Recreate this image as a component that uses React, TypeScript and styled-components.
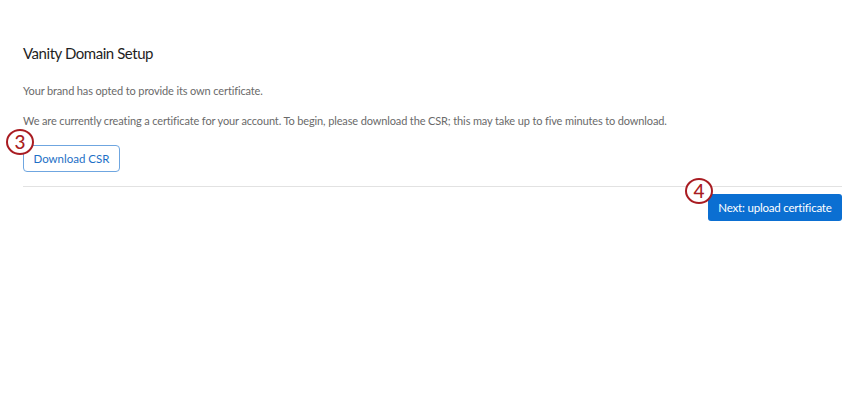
import React from "react";
import styled, { createGlobalStyle } from "styled-components";

const Global = createGlobalStyle`
  html, body { margin: 0; padding: 0; background: #fff; }
  body { font-family: Lato, "Open Sans", "Liberation Sans", sans-serif; }
`;

const Page = styled.div`
  width: 850px;
  height: 412px;
  box-sizing: border-box;
  padding: 42px 8px 0 23px;
  display: flex;
  flex-direction: column;
`;

const Title = styled.h1`
  margin: 0;
  font-size: 15px;
  font-weight: 400;
  letter-spacing: -0.45px;
  line-height: 22px;
  color: #1f1f1f;
`;

const Para = styled.p<{ $top: number }>`
  margin: ${(p) => p.$top}px 0 0;
  font-size: 11px;
  letter-spacing: -0.13px;
  line-height: 16px;
  color: #6a6a6a;
`;

const Anchor = styled.div<{ $top?: number }>`
  position: relative;
  align-self: flex-start;
  margin-top: ${(p) => p.$top ?? 0}px;
  display: flex;
`;

const OutlineButton = styled.button`
  height: 27px;
  width: 97px;
  box-sizing: border-box;
  border: 1px solid #6fa6e0;
  border-radius: 4px;
  background: #fff;
  color: #1d6fc6;
  font-family: inherit;
  font-size: 11.5px;
  padding: 0;
`;

const Divider = styled.hr`
  margin: 14px 0 0;
  border: 0;
  border-top: 1px solid #e2e2e2;
`;

const Footer = styled.div`
  display: flex;
  justify-content: flex-end;
  margin-top: 7px;
`;

const PrimaryButton = styled.button`
  height: 27px;
  width: 134px;
  box-sizing: border-box;
  border: 0;
  border-radius: 3px;
  background: #0b6fd2;
  color: #fff;
  font-family: inherit;
  font-size: 11.5px;
  letter-spacing: -0.2px;
  padding: 0;
`;

const Badge = styled.div<{ $left: number; $top: number }>`
  position: absolute;
  left: ${(p) => p.$left}px;
  top: ${(p) => p.$top}px;
  width: 28px;
  height: 26px;
  box-sizing: border-box;
  border: 2px solid #a91c22;
  border-radius: 50%;
  background: #fff;
  color: #a91c22;
  font-size: 19px;
  font-weight: 500;
  line-height: 22px;
  text-align: center;
`;

export default function App() {
  return (
    <>
      <Global />
      <Page>
        <Title>Vanity Domain Setup</Title>
        <Para $top={19}>Your brand has opted to provide its own certificate.</Para>
        <Para $top={14}>
          We are currently creating a certificate for your account. To begin, please download the CSR; this may take up to five minutes to download.
        </Para>
        <Anchor $top={16}>
          <OutlineButton>Download CSR</OutlineButton>
          <Badge $left={-17} $top={-16}>3</Badge>
        </Anchor>
        <Divider />
        <Footer>
          <Anchor>
            <PrimaryButton>Next: upload certificate</PrimaryButton>
            <Badge $left={-23} $top={-16}>4</Badge>
          </Anchor>
        </Footer>
      </Page>
    </>
  );
}
